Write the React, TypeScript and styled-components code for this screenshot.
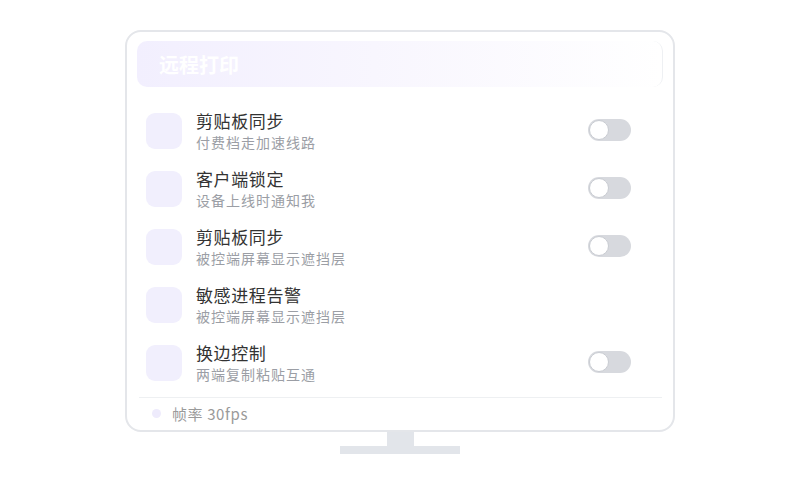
import React from "react";
import styled, { createGlobalStyle } from "styled-components";

const Global = createGlobalStyle`
  html, body { margin: 0; padding: 0; background: #ffffff; }
  body { font-family: "Noto Sans CJK SC", "Noto Sans", sans-serif; }
`;

const Page = styled.div`
  width: 800px;
  height: 500px;
  display: flex;
  flex-direction: column;
  align-items: center;
  padding-top: 30px;
  box-sizing: border-box;
`;

const Monitor = styled.div`
  width: 550px;
  height: 402px;
  box-sizing: border-box;
  border: 2px solid #e4e6ea;
  border-radius: 16px;
  background: #ffffff;
  padding: 9px 10px 0 10px;
  display: flex;
  flex-direction: column;
`;

const Header = styled.div`
  height: 46px;
  border-radius: 10px;
  background: linear-gradient(90deg, #f2effe 0%, #f8f6fe 45%, #ffffff 100%);
  border-right: 1px solid #eef0f3;
  display: flex;
  align-items: center;
  padding-left: 22px;
  color: #ffffff;
  font-size: 20px;
  font-weight: 700;
`;

const List = styled.div`
  display: flex;
  flex-direction: column;
  padding: 15px 32px 5px 9px;
`;

const Row = styled.div`
  height: 58px;
  display: flex;
  align-items: center;
`;

const IconBox = styled.div`
  width: 36px;
  height: 36px;
  border-radius: 9px;
  background: #f1effd;
  flex-shrink: 0;
`;

const Texts = styled.div`
  flex: 1;
  margin-left: 14px;
  display: flex;
  flex-direction: column;
  margin-top: 0;
`;

const Title = styled.div`
  font-size: 17px;
  line-height: 22px;
  letter-spacing: 0.6px;
  color: #333333;
`;

const Sub = styled.div`
  font-size: 14px;
  line-height: 20px;
  letter-spacing: 1px;
  color: #9b9ea5;
`;

const Toggle = styled.div`
  width: 43px;
  height: 22px;
  border-radius: 11px;
  background: #d7d9de;
  position: relative;
  flex-shrink: 0;
  margin-top: -2px;
`;

const Knob = styled.div`
  position: absolute;
  left: 1px;
  top: 1px;
  width: 18px;
  height: 18px;
  border-radius: 50%;
  background: #ffffff;
  border: 1px solid #c9ccd2;
`;

const Divider = styled.div`
  height: 1px;
  background: #eef0f2;
  margin: 0 1px 0 2px;
`;

const Footer = styled.div`
  flex: 1;
  display: flex;
  align-items: center;
  padding-left: 15px;
  padding-bottom: 2px;
`;

const Dot = styled.div`
  width: 9px;
  height: 9px;
  border-radius: 50%;
  background: #eeebfc;
  margin-right: 11px;
`;

const FooterText = styled.div`
  font-size: 15px;
  letter-spacing: 0.6px;
  color: #9a9a9a;
`;

const Neck = styled.div`
  width: 27px;
  height: 14px;
  background: #e2e5ea;
`;

const Base = styled.div`
  width: 120px;
  height: 8px;
  background: #e2e5ea;
`;

const items = [
  { title: "剪贴板同步", sub: "付费档走加速线路", toggle: true },
  { title: "客户端锁定", sub: "设备上线时通知我", toggle: true },
  { title: "剪贴板同步", sub: "被控端屏幕显示遮挡层", toggle: true },
  { title: "敏感进程告警", sub: "被控端屏幕显示遮挡层", toggle: false },
  { title: "换边控制", sub: "两端复制粘贴互通", toggle: true },
];

export default function App() {
  return (
    <>
      <Global />
      <Page>
        <Monitor>
          <Header>远程打印</Header>
          <List>
            {items.map((it, i) => (
              <Row key={i}>
                <IconBox />
                <Texts>
                  <Title>{it.title}</Title>
                  <Sub>{it.sub}</Sub>
                </Texts>
                {it.toggle && (
                  <Toggle>
                    <Knob />
                  </Toggle>
                )}
              </Row>
            ))}
          </List>
          <Divider />
          <Footer>
            <Dot />
            <FooterText>帧率 30fps</FooterText>
          </Footer>
        </Monitor>
        <Neck />
        <Base />
      </Page>
    </>
  );
}
